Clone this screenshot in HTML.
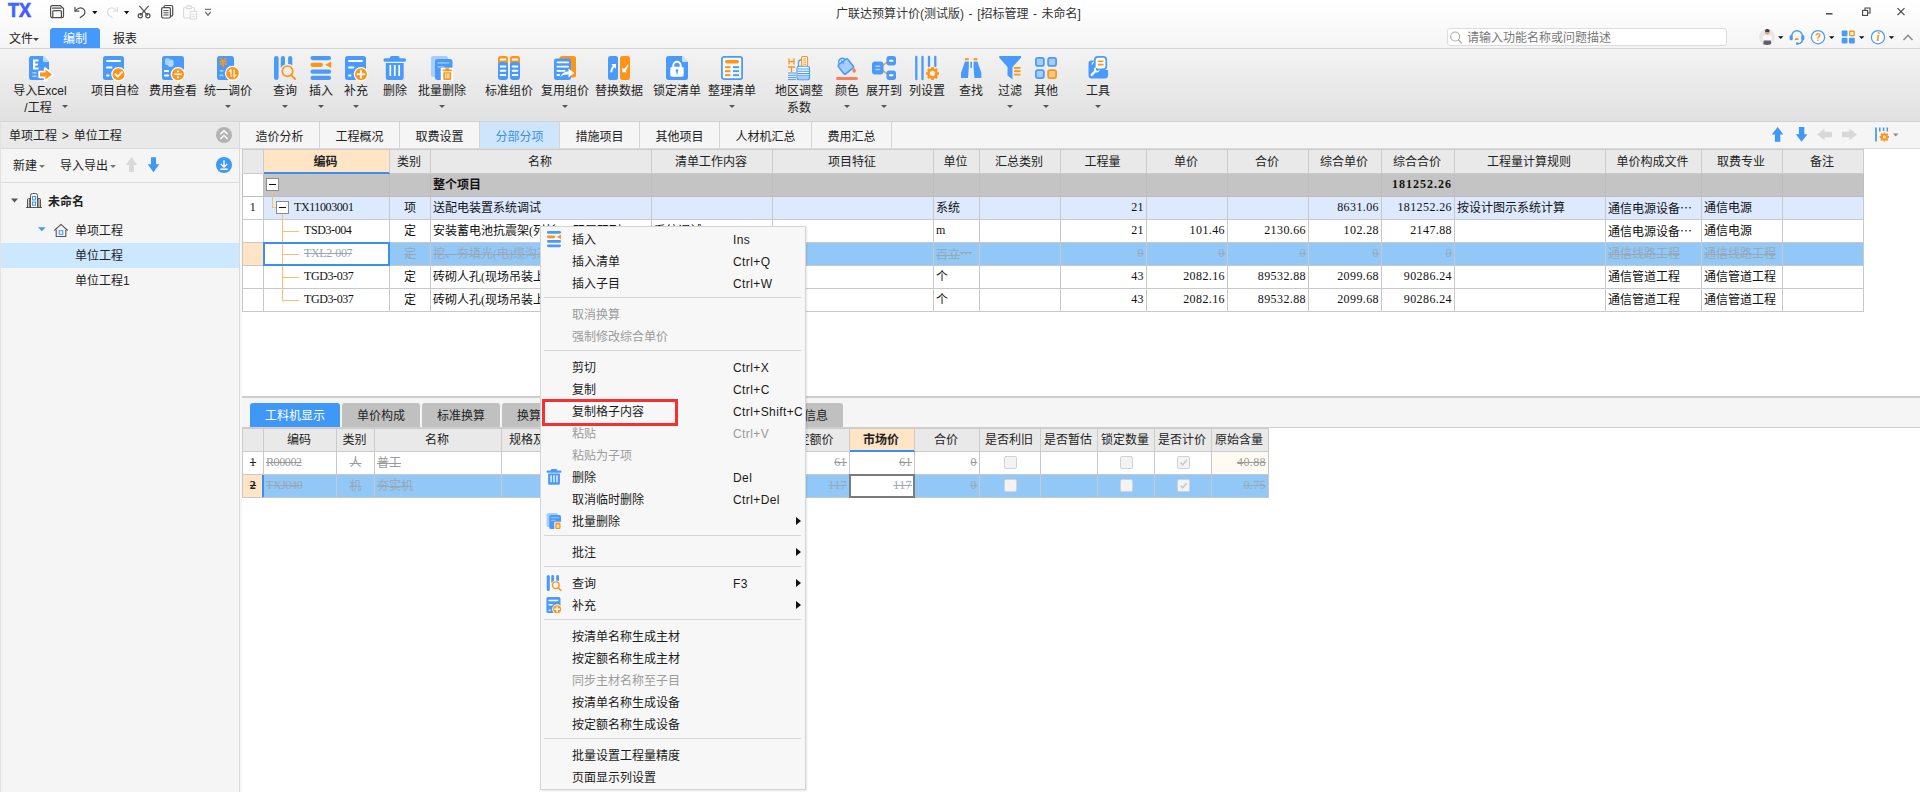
<!DOCTYPE html>
<html lang="zh-CN">
<head>
<meta charset="utf-8">
<title>广联达预算计价(测试版) - [招标管理 - 未命名]</title>
<style>
*{box-sizing:border-box;margin:0;padding:0}
html,body{width:1920px;height:792px;overflow:hidden;background:#fff}
body{position:relative;font-family:"Liberation Sans","Noto Sans CJK SC",sans-serif;font-size:12px;color:#222;line-height:1}
.abs{position:absolute}
svg{position:absolute;overflow:visible}
.t{position:absolute;white-space:nowrap;line-height:16px;height:16px}
/* title bar */
#titlebar{position:absolute;left:0;top:0;width:1920px;height:49px;background:linear-gradient(#ffffff 0,#fdfdfd 14px,#f4f4f4 49px)}
#title{position:absolute;left:0;width:1917px;top:6px;word-spacing:1.2px;text-align:center;line-height:16px;color:#333;font-size:12px}
#ribbon{position:absolute;left:0;top:48px;width:1920px;height:74px;background:linear-gradient(#f3f3f3,#e1e1e1);border-top:1px solid #d6d6d6;border-bottom:1px solid #d2d2d2}
.mtab{position:absolute;top:28px;height:21px;line-height:22px;font-size:12px;color:#222;text-align:center}
#mtab-edit{left:50px;width:50px;background:#4699fc;color:#fff;border-radius:3px 3px 0 0}
.rlabel{position:absolute;top:83px;line-height:16px;text-align:center;white-space:nowrap;color:#222;font-size:12px;transform:translateX(-50%)}
.rarrow{position:absolute;width:0;height:0;border-left:3px solid transparent;border-right:3px solid transparent;border-top:3px solid #555}
#search{position:absolute;left:1447px;top:28px;width:280px;height:18px;background:#fff;border:1px solid #dcdcdc;border-radius:3px}
#search span{position:absolute;left:19px;top:1px;line-height:16px;color:#777;font-size:12px;white-space:nowrap}
/* left panel */
#left{position:absolute;left:0;top:122px;width:240px;height:670px;background:#f5f5f5;border-right:1px solid #dadada;border-left:1px solid #e2e2e2}
#lhead{position:absolute;left:0;top:0;width:238px;height:27px;background:#e9e9e9;border-bottom:1px solid #d9d9d9;border-top:1px solid #ededed}
#ltool{position:absolute;left:0;top:27px;width:238px;height:34px;border-bottom:1px solid #dcdcdc}
#lsel{position:absolute;left:0;top:121px;width:238px;height:25px;background:#cce8ff}
/* main tabs */
#tabbar{position:absolute;left:240px;top:122px;width:1680px;height:27px;background:#f5f5f5;border-bottom:1px solid #dcdcdc}
.tab{position:absolute;top:0;height:26px;line-height:30px;text-align:center;border-right:1px solid #d4d4d4;color:#222;font-size:12px}
.tab.on{background:#cfe5fb;color:#3b8ff0}
/* grids */
.grid{position:absolute;border-collapse:collapse;table-layout:fixed;font-size:12px;font-family:"Liberation Serif","Noto Sans CJK SC",sans-serif}
.grid td{border:1px solid #c8c8c8;height:23px;padding:0 2px;white-space:nowrap;overflow:hidden;line-height:16px;vertical-align:middle;color:#111}
.grid tr.h td{background:#e9e9e9;text-align:center;color:#222;padding:0 2px 0 0;border-color:#cbcbcb}
.grid td.hot{background:#ffe4c6 !important;font-weight:bold;border-bottom:1px solid #3b8ff0 !important;box-shadow:inset 0 -1px 0 #3b8ff0}
.grid tr.h24 td{height:24px}
.grid td.r{text-align:right;padding-right:2px}
.grid td.c{text-align:center;padding:0}
.grid tr.g td{background:#c4c4c4;font-weight:bold;border-color:#bdbdbd}
.grid tr.b td{background:#dde9fe}
.grid tr.s td{background:#92c8f7;color:#9aa7b5;text-decoration:line-through}
.grid tr.d td{color:#9a9a9a;text-decoration:line-through}
.num{font-size:12px;letter-spacing:.4px;position:relative;top:-1px}
.code{letter-spacing:-.4px;position:relative;top:-1px}
.el{font-family:"Noto Sans CJK SC",sans-serif}
/* bottom */
#split{position:absolute;left:242px;top:396px;width:1678px;height:2px;background:#cdcdcd}
#btabbar{position:absolute;left:242px;top:398px;width:1678px;height:30px;background:#f5f5f5;border-bottom:1px solid #d0d0d0}
.btab{position:absolute;top:403px;height:24px;line-height:26px;text-align:center;background:#c0c0c0;color:#222;border-radius:3px 3px 0 0;font-size:12px}
.btab.on{background:#3f97f6;color:#fff}
/* context menu */
#menu{position:absolute;left:540px;top:226px;width:266px;height:564px;background:#f7f7f7;border:1px solid #d4d4d4;box-shadow:1px 1px 2px rgba(0,0,0,.10)}
#menuin{position:absolute;left:1px;top:1px;width:263px;height:560px}
.mi{position:absolute;left:0;width:263px;height:22px;line-height:22px;color:#1a1a1a;font-size:12px}
.mi b{position:absolute;left:30px;top:1px;font-weight:normal;white-space:nowrap}
.mi i{position:absolute;left:191px;top:1px;font-style:normal;white-space:nowrap;letter-spacing:.4px}
.mi.dis{color:#9b9b9b}
.mi u{position:absolute;left:254px;top:7px;width:0;height:0;border-top:4px solid transparent;border-bottom:4px solid transparent;border-left:5px solid #111}
.msep{position:absolute;left:2px;width:257px;height:1px;background:#d6d6d6}
#redbox{position:absolute;left:542px;top:399px;width:136px;height:27px;border:3px solid #f5302f}
.cb{display:inline-block;width:13px;height:13px;background:#f3f3f3;border:1px solid #d2d2d2;border-radius:2px;vertical-align:middle;position:relative;top:-2px}
</style>
</head>
<body>
<div id="titlebar"></div>
<div id="title">广联达预算计价(测试版) - [招标管理 - 未命名]</div>
<div id="search"><span>请输入功能名称或问题描述</span></div>
<!-- title bar icons -->
<svg style="left:0;top:0" width="1920" height="50" viewBox="0 0 1920 50">
<defs><linearGradient id="txg" x1="0" y1="0" x2="1" y2="1"><stop offset="0" stop-color="#3872ff"/><stop offset="1" stop-color="#4a4dff"/></linearGradient></defs>
<text x="8" y="17" font-family="Liberation Sans,sans-serif" font-weight="bold" font-size="20" textLength="23" lengthAdjust="spacingAndGlyphs" fill="url(#txg)" stroke="url(#txg)" stroke-width=".7">TX</text>
<g fill="none" stroke="#4d4d4d" stroke-width="1.2" stroke-linejoin="round" stroke-linecap="round">
<!-- save -->
<path d="M52.2 5.7H60.5L63.5 8.5V16A1.6 1.6 0 0 1 61.9 17.6H52.2A1.6 1.6 0 0 1 50.6 16V7.3A1.6 1.6 0 0 1 52.2 5.7Z"/>
<path d="M52.5 8.2H61"/><path d="M52.8 17.6V11.8A1.2 1.2 0 0 1 54 10.6H60.2A1.2 1.2 0 0 1 61.4 11.8V17.6"/>
<!-- undo -->
<path d="M75 7.4V11.2H78.8"/><path d="M75.3 11C77 8.3 80.3 7.2 82.8 8.6C85.2 10 85.5 12.8 83.8 14.9L80.3 17.6"/>
<!-- scissors -->
<path d="M139.8 6.3L147.5 15.2M148.2 6.3L140.5 15.2"/><circle cx="140.3" cy="15.8" r="2.1"/><circle cx="147.9" cy="15.8" r="2.1"/>
<!-- copy -->
<path d="M164 7.3V6.9A1.4 1.4 0 0 1 165.4 5.5H171.3A1.4 1.4 0 0 1 172.7 6.9V14.8A1.4 1.4 0 0 1 171.3 16.2H170.6"/>
<rect x="161.6" y="7.6" width="8.8" height="10.4" rx="1.4"/><path d="M163.8 10.6H168.2M163.8 12.8H168.2M163.8 15H168.2" stroke-width="1"/>
</g>
<!-- redo (disabled) -->
<g fill="none" stroke="#dcdcdc" stroke-width="1.2" stroke-linejoin="round" stroke-linecap="round">
<path d="M117.4 7.4V11.2H113.6"/><path d="M117.1 11C115.4 8.3 112.1 7.2 109.6 8.6C107.2 10 106.9 12.8 108.6 14.9L112.1 17.6"/>
<!-- paste (disabled) -->
<path d="M186.5 7.5H184.9A1.4 1.4 0 0 0 183.5 8.9V16.6A1.4 1.4 0 0 0 184.9 18H189.5"/><path d="M191.5 7.5H193.1A1.4 1.4 0 0 1 194.5 8.9V10.5"/>
<path d="M186.5 8.6V7A.8 .8 0 0 1 187.3 6.2H187.8A1.3 1.3 0 0 1 190.2 6.2H190.7A.8 .8 0 0 1 191.5 7V8.6Z"/>
<rect x="190.2" y="11.4" width="6.4" height="7.8" rx="1.2"/><path d="M192 14.2H194.8M192 16.4H194.8" stroke-width="1"/>
</g>
<!-- dropdown arrows -->
<path d="M92.2 10.9H97.4L94.8 14.3Z" fill="#111"/><path d="M124 10.9H129.2L126.6 14.3Z" fill="#111"/>
<!-- more -->
<path d="M205 9.3H211" stroke="#6a6a6a" stroke-width="1.1"/><path d="M205.3 12L208 15.2L210.7 12" fill="none" stroke="#6a6a6a" stroke-width="1.2"/>
<!-- window controls -->
<rect x="1826" y="13" width="6.5" height="1.6" fill="#555"/>
<g fill="none" stroke="#444" stroke-width="1.1"><path d="M1865 10V8H1870V13H1868"/><rect x="1862.6" y="10.4" width="5" height="5"/></g>
<path d="M1897.5 8.2L1904.5 15.2M1904.5 8.2L1897.5 15.2" stroke="#444" stroke-width="1.2"/>
<!-- search icon -->
<circle cx="1455.2" cy="36.5" r="4.5" fill="none" stroke="#b0b0b0" stroke-width="1.2"/><path d="M1458.5 40L1461.5 43" stroke="#b0b0b0" stroke-width="1.3" stroke-linecap="round"/>
<!-- avatar -->
<circle cx="1767" cy="37" r="8" fill="#e9e6e6"/>
<clipPath id="avc"><circle cx="1767" cy="37" r="8"/></clipPath>
<g clip-path="url(#avc)"><circle cx="1767.3" cy="32.3" r="2.3" fill="#c9a58f"/><path d="M1765 30.8A2.4 2.4 0 0 1 1769.7 30.8L1769 32H1765.5Z" fill="#4a3c3a"/>
<path d="M1762.5 36.5C1764 34.8 1770.5 34.8 1772 36.5L1771 41H1763.5Z" fill="#fafafa"/><path d="M1763.8 40.5H1770.8L1771.5 46H1763Z" fill="#5e5d68"/></g>
<g fill="#111"><path d="M1778 36.2H1783.4L1780.7 39Z"/><path d="M1829 36.2H1834.4L1831.7 39Z"/><path d="M1859 36.2H1864.4L1861.7 39Z"/><path d="M1888.8 36.2H1894.2L1891.5 39Z"/></g>
<!-- headset -->
<g fill="none" stroke="#4a9bf9" stroke-width="1.5"><path d="M1791.7 36A5.3 5.3 0 0 1 1802.3 36"/><path d="M1802.3 39.5C1802.3 42 1800.5 43.5 1798 43.7" /></g>
<rect x="1789.6" y="35.3" width="3.2" height="5" rx="1.4" fill="#4a9bf9"/><rect x="1801.2" y="35.3" width="3.2" height="5" rx="1.4" fill="#4a9bf9"/>
<rect x="1794.6" y="38.3" width="4.2" height="1.7" rx=".8" fill="#ff9416"/><circle cx="1797.2" cy="43.6" r="1.3" fill="#4a9bf9"/>
<!-- help -->
<circle cx="1818" cy="37.2" r="6.6" fill="#fff" stroke="#4a9bf9" stroke-width="1.3"/>
<text x="1818" y="41.3" text-anchor="middle" font-family="Liberation Sans,sans-serif" font-weight="bold" font-size="10" fill="#ff9416">?</text>
<!-- grid -->
<g fill="#4a9bf9"><rect x="1841.7" y="30.5" width="5.8" height="5.8" rx="1"/><rect x="1841.7" y="37.7" width="5.8" height="5.8" rx="1"/><rect x="1849" y="37.7" width="5.8" height="5.8" rx="1"/></g>
<rect x="1849.7" y="31.2" width="4.4" height="4.4" rx=".6" fill="#fff" stroke="#ff9416" stroke-width="1.4"/>
<!-- info -->
<circle cx="1878" cy="37.2" r="6.6" fill="#fff" stroke="#4a9bf9" stroke-width="1.3"/>
<text x="1878.2" y="41.4" text-anchor="middle" font-family="Liberation Serif,serif" font-weight="bold" font-style="italic" font-size="12" fill="#ff9416">i</text>
<!-- chevron -->
<path d="M1903.5 40L1908 35.3L1912.5 40" fill="none" stroke="#8a8a8a" stroke-width="1.5"/>
</svg>

<div class="mtab" style="left:9px;width:24px">文件</div><div class="rarrow" style="left:33px;top:38px;border-top-color:#444"></div>
<div class="mtab" id="mtab-edit">编制</div>
<div class="mtab" style="left:113px;width:24px">报表</div>
<div id="ribbon"></div>
<div class="rlabel" style="left:40px">导入Excel</div>
<div class="rlabel" style="left:38px;top:100px">/工程</div>
<div class="rarrow" style="left:62px;top:105px"></div>
<div class="rlabel" style="left:115px">项目自检</div>
<div class="rlabel" style="left:173px">费用查看</div>
<div class="rlabel" style="left:228px">统一调价</div>
<div class="rarrow" style="left:225px;top:105px"></div>
<div class="rlabel" style="left:285px">查询</div>
<div class="rarrow" style="left:282px;top:105px"></div>
<div class="rlabel" style="left:321px">插入</div>
<div class="rarrow" style="left:318px;top:105px"></div>
<div class="rlabel" style="left:356px">补充</div>
<div class="rarrow" style="left:353px;top:105px"></div>
<div class="rlabel" style="left:395px">删除</div>
<div class="rlabel" style="left:442px">批量删除</div>
<div class="rarrow" style="left:439px;top:105px"></div>
<div class="rlabel" style="left:509px">标准组价</div>
<div class="rlabel" style="left:565px">复用组价</div>
<div class="rarrow" style="left:562px;top:105px"></div>
<div class="rlabel" style="left:619px">替换数据</div>
<div class="rlabel" style="left:677px">锁定清单</div>
<div class="rlabel" style="left:732px">整理清单</div>
<div class="rarrow" style="left:729px;top:105px"></div>
<div class="rlabel" style="left:799px">地区调整</div>
<div class="rlabel" style="left:799px;top:100px">系数</div>
<div class="rlabel" style="left:847px">颜色</div>
<div class="rarrow" style="left:844px;top:105px"></div>
<div class="rlabel" style="left:884px">展开到</div>
<div class="rarrow" style="left:881px;top:105px"></div>
<div class="rlabel" style="left:927px">列设置</div>
<div class="rlabel" style="left:971px">查找</div>
<div class="rlabel" style="left:1010px">过滤</div>
<div class="rarrow" style="left:1007px;top:105px"></div>
<div class="rlabel" style="left:1046px">其他</div>
<div class="rarrow" style="left:1043px;top:105px"></div>
<div class="rlabel" style="left:1098px">工具</div>
<div class="rarrow" style="left:1095px;top:105px"></div>
<!-- ribbon icons -->
<svg style="left:0;top:0" width="1920" height="130" viewBox="0 0 1920 130">
<!-- import excel -->
<g transform="translate(29,56)">
<path d="M2.5 0H14L20 6V21.5A2.5 2.5 0 0 1 17.5 24H2.5A2.5 2.5 0 0 1 0 21.5V2.5A2.5 2.5 0 0 1 2.5 0Z" fill="#4a9bf9"/>
<path d="M14 0L20 6H15.5A1.5 1.5 0 0 1 14 4.5Z" fill="#b9d9fd"/>
<path d="M4 3.5H9.5V5.5H6.2V7.5H9V9.4H6.2V11.5H9.5V13.5H4Z" fill="#fff"/>
<rect x="3.5" y="16" width="4" height="1.6" fill="#a9d0fc"/><rect x="3.5" y="19.5" width="4" height="1.6" fill="#a9d0fc"/>
<path d="M10.5 16H16V12.5L23.5 18.5L16 24.5V21H10.5Z" fill="#fff" stroke="#fff" stroke-width="2.4" stroke-linejoin="round"/>
<path d="M11 16.5H16.5V13.5L23 18.5L16.5 23.5V20.5H11Z" fill="#ff9416"/>
</g>
<!-- self check -->
<g transform="translate(103,56)">
<rect x="0" y="0" width="21" height="24" rx="2.5" fill="#4a9bf9"/>
<rect x="3" y="4" width="15" height="2" rx="1" fill="#fff"/><rect x="3" y="10.5" width="6.5" height="2" rx="1" fill="#fff"/><rect x="3" y="18.5" width="3.5" height="2" rx="1" fill="#fff"/>
<circle cx="15.5" cy="18.3" r="7.3" fill="#fff"/><circle cx="15.5" cy="18.3" r="6" fill="#ff9416"/>
<path d="M12.3 18.2L14.8 20.7L19 16.2" fill="none" stroke="#fff" stroke-width="1.8" stroke-linecap="round" stroke-linejoin="round"/>
</g>
<!-- fee view -->
<g transform="translate(162,56)">
<rect x="0" y="0" width="22" height="24" rx="2.5" fill="#4a9bf9"/>
<g fill="#a9d0fc"><rect x="3" y="2.2" width="5" height="7" rx="2"/><rect x="6" y="3.5" width="5.5" height="7.5" rx="2"/></g>
<g stroke="#dcecfe" stroke-width=".6" fill="none"><path d="M6.2 6H11.3M6.2 8.3H11.3"/></g>
<rect x="2" y="14" width="5" height="2" rx=".8" fill="#fff"/><rect x="2" y="18.5" width="5" height="2" rx=".8" fill="#fff"/>
<circle cx="16" cy="18.3" r="7.3" fill="#fff"/><circle cx="16" cy="18.3" r="6" fill="#ff9416"/>
<rect x="12.3" y="17.5" width="7.4" height="1.6" fill="#fff"/><circle cx="16" cy="15.3" r="1.1" fill="#fff"/><circle cx="16" cy="21.3" r="1.1" fill="#fff"/>
</g>
<!-- adjust price -->
<g transform="translate(217,56)">
<rect x="0" y="0" width="17" height="24" rx="2.5" fill="#4a9bf9"/>
<path d="M3.5 2L6.2 5.2L9 2M2.5 5.4H10M2.5 8H10M6.2 5.4V11.5" fill="none" stroke="#ff9416" stroke-width="1.5"/>
<rect x="2.5" y="14" width="4" height="1.8" rx=".8" fill="#a9d0fc"/><rect x="2.5" y="18.5" width="4" height="1.8" rx=".8" fill="#a9d0fc"/>
<circle cx="15.5" cy="17.3" r="7.6" fill="#fff"/><circle cx="15.5" cy="17.3" r="6.3" fill="#ff9416"/>
<path d="M13.4 21V15.8H11.2L13.9 12.7L14.6 13.5V21ZM17.6 13.6V18.8H19.8L17.1 21.9L16.4 21.1V13.6Z" fill="#fff"/>
</g>
<!-- query -->
<g transform="translate(273.5,56)">
<rect x="0.5" y="0" width="4.6" height="24" rx="2.3" fill="#4a9bf9"/>
<path d="M7.3 2A2.1 2.1 0 0 1 11.5 2V8.5A7 7 0 0 0 7.3 12Z" fill="#4a9bf9"/>
<path d="M14.6 2A2.1 2.1 0 0 1 18.8 2V9.5A7 7 0 0 0 14.6 8.1Z" fill="#4a9bf9"/>
<circle cx="14" cy="15.2" r="5.2" fill="none" stroke="#ff9416" stroke-width="1.7"/>
<path d="M17.8 19.2L21.6 23" stroke="#ff9416" stroke-width="1.9" stroke-linecap="round"/>
</g>
<!-- insert -->
<g transform="translate(310.5,56)">
<rect x="0" y="0" width="20.6" height="4.2" rx="2.1" fill="#4a9bf9"/>
<rect x="0" y="6.7" width="12.5" height="4.2" rx="2.1" fill="#ff9416"/>
<path d="M20.6 5.5V12L14.6 8.8Z" fill="#ff9416"/>
<rect x="0" y="13.6" width="20.6" height="4.2" rx="2.1" fill="#4a9bf9"/>
<rect x="0" y="19.8" width="20.6" height="4.2" rx="2.1" fill="#4a9bf9"/>
</g>
<!-- supplement -->
<g transform="translate(345,56)">
<rect x="0" y="0" width="21" height="24" rx="2.5" fill="#4a9bf9"/>
<rect x="3" y="4" width="15" height="2" rx="1" fill="#fff"/><rect x="3" y="10.5" width="6.5" height="2" rx="1" fill="#fff"/><rect x="3" y="18.5" width="3.5" height="2" rx="1" fill="#fff"/>
<circle cx="16" cy="18.3" r="7.3" fill="#fff"/><circle cx="16" cy="18.3" r="6" fill="#ff9416"/>
<path d="M16 14.8V21.8M12.5 18.3H19.5" stroke="#fff" stroke-width="1.9" stroke-linecap="round"/>
</g>
<!-- delete -->
<g transform="translate(383.5,56)">
<path d="M8 0H14.5A1.5 1.5 0 0 1 16 1.5V2.2H21A1.5 1.5 0 0 1 22.5 3.7V4.2A1.5 1.5 0 0 1 21 5.7H1.5A1.5 1.5 0 0 1 0 4.2V3.7A1.5 1.5 0 0 1 1.5 2.2H6.5V1.5A1.5 1.5 0 0 1 8 0Z" fill="#4a9bf9"/>
<path d="M2.3 7H20.2V21.5A2.5 2.5 0 0 1 17.7 24H4.8A2.5 2.5 0 0 1 2.3 21.5Z" fill="#4a9bf9"/>
<path d="M6.8 9V20M11.25 9V20M15.7 9V20" stroke="#fff" stroke-width="1.7"/>
</g>
<!-- batch delete -->
<g transform="translate(431,56)">
<rect x="0" y="0" width="17" height="21" rx="2.5" fill="#a6cdfb"/>
<rect x="4" y="3" width="17.5" height="21" rx="2.5" fill="#4a9bf9"/>
<rect x="6.5" y="6" width="12" height="1.8" rx=".9" fill="#8ec0fb"/><rect x="6.5" y="10" width="7" height="1.8" rx=".9" fill="#8ec0fb"/>
<path d="M10.5 12.5H21.5V24H10.5Z" fill="#fff" stroke="#fff" stroke-width="1.5" stroke-linejoin="round"/>
<path d="M14.3 12.3H18.2V13.4H20.3A.8 .8 0 0 1 21.1 14.2V14.5A.8 .8 0 0 1 20.3 15.3H12.2A.8 .8 0 0 1 11.4 14.5V14.2A.8 .8 0 0 1 12.2 13.4H14.3Z" fill="#ff9416"/>
<path d="M12.3 16.3H20.2V22.7A1.3 1.3 0 0 1 18.9 24H13.6A1.3 1.3 0 0 1 12.3 22.7Z" fill="#ff9416"/>
<path d="M14.6 17.5V22.5M16.25 17.5V22.5M17.9 17.5V22.5" stroke="#fff" stroke-width=".9"/>
</g>
<!-- standard group price -->
<g transform="translate(498,56)">
<path d="M2.5 0H7.5A2.5 2.5 0 0 1 10 2.5V8H0V2.5A2.5 2.5 0 0 1 2.5 0Z" fill="#ff9416"/>
<path d="M14.5 0H19.5A2.5 2.5 0 0 1 22 2.5V8H12V2.5A2.5 2.5 0 0 1 14.5 0Z" fill="#ff9416"/>
<rect x="0" y="6" width="10" height="18" rx="3" fill="#4a9bf9"/><rect x="12" y="6" width="10" height="18" rx="3" fill="#4a9bf9"/>
<g fill="#fff"><rect x="1.7" y="2.5" width="6.6" height="1.9" rx=".9"/><rect x="13.7" y="2.5" width="6.6" height="1.9" rx=".9"/>
<rect x="1.7" y="9.5" width="6.6" height="2" rx="1"/><rect x="13.7" y="9.5" width="6.6" height="2" rx="1"/>
<rect x="1.7" y="13.7" width="6.6" height="2" rx="1"/><rect x="13.7" y="13.7" width="6.6" height="2" rx="1"/>
<rect x="1.7" y="17.9" width="6.6" height="2" rx="1"/><rect x="13.7" y="17.9" width="6.6" height="2" rx="1"/></g>
</g>
<!-- reuse group price -->
<g transform="translate(554,56)">
<rect x="5.5" y="0" width="16.5" height="21.5" rx="2.5" fill="#ff9416"/>
<rect x="0" y="2.5" width="17" height="21.5" rx="2.5" fill="#4a9bf9"/>
<g fill="#fff"><rect x="2.5" y="5.5" width="12.5" height="1.8" rx=".9"/><rect x="2.5" y="9.7" width="12.5" height="1.8" rx=".9"/><rect x="2.5" y="13.9" width="9" height="1.8" rx=".9"/><rect x="2.5" y="18.1" width="3.5" height="1.8" rx=".9"/></g>
<path d="M6.2 21C8 17 11 15.4 14.5 15.4V12.6L20.3 17L14.5 21.4V18.6C11.5 18.4 9 19 6.2 21Z" fill="#fff"/>
</g>
<!-- replace data -->
<g transform="translate(608,56)">
<rect x="0" y="0" width="10" height="24" rx="2.5" fill="#4a9bf9"/><rect x="12" y="0" width="10" height="24" rx="2.5" fill="#ff9416"/>
<path d="M3.3 8H8V12.8L6.4 11.2C5 12.6 4.4 14.2 4.3 16.3H2.3C2.3 13.5 3.2 11.5 4.9 9.7Z" fill="#fff"/>
<path d="M19.3 8.5L20.3 9C20 11.5 19 13.3 17.5 14.8L19 16.3H14.3V11.5L15.9 13.1C17.5 11.8 18.5 10.5 19.3 8.5Z" fill="#fff"/>
</g>
<!-- lock list -->
<g transform="translate(666,56)">
<path d="M2.5 0H16L22 6V21.5A2.5 2.5 0 0 1 19.5 24H2.5A2.5 2.5 0 0 1 0 21.5V2.5A2.5 2.5 0 0 1 2.5 0Z" fill="#4a9bf9"/>
<path d="M16 0L22 6H17.5A1.5 1.5 0 0 1 16 4.5Z" fill="#cfe4fd"/>
<path d="M7.3 11V9.5A3.7 3.7 0 0 1 14.7 9.5V11" fill="none" stroke="#fff" stroke-width="1.9"/>
<rect x="4.3" y="10.8" width="13.4" height="10" rx="1.8" fill="#fff"/>
<circle cx="11" cy="14.6" r="1.3" fill="#4a9bf9"/><rect x="10.4" y="15" width="1.2" height="3.2" fill="#4a9bf9"/>
</g>
<!-- tidy list -->
<g transform="translate(721,56)">
<rect x=".9" y=".9" width="20.2" height="22.2" rx="2.2" fill="#f4f8fd" stroke="#4a9bf9" stroke-width="1.8"/>
<rect x="4" y="4" width="14" height="3.6" rx="1.8" fill="#ff9416"/>
<g fill="#ff9416"><rect x="4" y="10.2" width="5.5" height="1.9"/><rect x="4" y="14.2" width="5.5" height="1.9"/><rect x="4" y="18.2" width="5.5" height="1.9"/></g>
<g fill="#4a9bf9"><rect x="12" y="10.2" width="6" height="1.9"/><rect x="12" y="14.2" width="6" height="1.9"/><rect x="12" y="18.2" width="6" height="1.9"/></g>
</g>
<!-- area coefficient -->
<g transform="translate(788,56)">
<path d="M1 2.5V8.5M6 2.5V8.5M1 5.5H6M0 11H7M3.5 11V16.2" fill="none" stroke="#ff9416" stroke-width="1.3"/>
<path d="M0 17H8M0 19.3H8M0 21.6H8M0 23.6H8" stroke="#4a9bf9" stroke-width="1"/>
<path d="M10.5 11V6.5C10.5 4.5 12 3.7 13.5 3.6" fill="none" stroke="#4a9bf9" stroke-width="1.2"/>
<rect x="13.6" y=".5" width="6" height="10" rx="1.2" fill="#fff5e8" stroke="#ff9416" stroke-width="1.1"/>
<path d="M15.3 3H18M15.3 4.8H18M15.3 6.6H18M15.3 8.4H18" stroke="#ff9416" stroke-width=".8"/>
<rect x="9" y="10.3" width="12.5" height="13.4" rx="2" fill="#fff" stroke="#4a9bf9" stroke-width="1.1"/>
<path d="M9.5 13H21M9.5 15.3H21M9.5 17.6H21M9.5 19.9H21M9.5 22H21" stroke="#4a9bf9" stroke-width="1.1"/>
</g>
<!-- color -->
<g transform="translate(836,56)">
<rect x="0" y="21" width="22" height="3" rx="1.5" fill="#fb7f57"/>
<g transform="rotate(-38 10 10)"><rect x="3.6" y="4.5" width="12" height="11.5" rx="1.5" fill="#a6cdfb" stroke="#4a9bf9" stroke-width="1.6"/>
<path d="M6 4.5A3.6 3.6 0 0 1 13.2 4.5" fill="none" stroke="#4a9bf9" stroke-width="1.5"/><path d="M9.6 2.5V7" stroke="#4a9bf9" stroke-width="1.4"/></g>
<path d="M18.2 11.8C19.3 13.2 20 14 20 15A1.8 1.8 0 0 1 16.4 15C16.4 14 17.1 13.2 18.2 11.8Z" fill="#fb7f57"/>
</g>
<!-- expand to -->
<g transform="translate(872,56)">
<path d="M8 12L17 4.5M8 12L17 19.5" stroke="#ff9416" stroke-width="1.4"/>
<rect x="0" y="5.5" width="11.5" height="13" rx="3" fill="#4a9bf9"/><rect x="14.5" y="0" width="9.5" height="9.5" rx="2.7" fill="#4a9bf9"/><rect x="14.5" y="14.5" width="9.5" height="9.5" rx="2.7" fill="#4a9bf9"/>
<rect x="3.3" y="9.6" width="5" height="1.4" rx=".6" fill="#a9d0fc"/><rect x="3.3" y="12.8" width="5" height="1.4" rx=".6" fill="#a9d0fc"/>
<rect x="17" y="3.8" width="4.5" height="2" rx="1" fill="#fff"/><rect x="17" y="18.3" width="4.5" height="2" rx="1" fill="#fff"/>
</g>
<!-- column settings -->
<g transform="translate(915,56)">
<path d="M1.3 .8V23.2M7.5 .8V23.2" stroke="#4a9bf9" stroke-width="2.3" stroke-linecap="round"/>
<path d="M14 .8V10M20.3 .8V10" stroke="#4a9bf9" stroke-width="2.3" stroke-linecap="round"/>
<g transform="translate(17.5,17.5)">
<circle r="4" fill="none" stroke="#ff9416" stroke-width="2.6"/>
<g stroke="#ff9416" stroke-width="2.6" stroke-linecap="butt"><path d="M0 -6.5V-4.5M0 6.5V4.5M-6.5 0H-4.5M6.5 0H4.5M-4.6 -4.6L-3.2 -3.2M4.6 4.6L3.2 3.2M-4.6 4.6L-3.2 3.2M4.6 -4.6L3.2 -3.2"/></g>
</g>
</g>
<!-- find (binoculars) -->
<g transform="translate(961,56)">
<rect x="4" y="2.2" width="3.8" height="2" fill="#ff9416"/><rect x="12.6" y="2.2" width="3.8" height="2" fill="#ff9416"/>
<path d="M4 5.5H7.8V12L7 22H0V17Z" fill="#4a9bf9"/><path d="M12.6 5.5H16.4L20.4 17V22H13.4L12.6 12Z" fill="#4a9bf9"/>
<rect x="9.4" y="5.8" width="1.6" height="6" fill="#4a9bf9"/>
</g>
<!-- filter -->
<g transform="translate(999,56)">
<path d="M1 0H21.3A1 1 0 0 1 22 1.7L13.5 11V23.5L8.5 19.5V11L.3 1.7A1 1 0 0 1 1 0Z" fill="#4a9bf9"/>
<path d="M15 11.8H21.5M15 15.2H21.5M15 18.6H21.5" stroke="#ff9416" stroke-width="1.7"/>
</g>
<!-- other -->
<g transform="translate(1035,57)">
<g fill="#a6cdfb" stroke="#4a9bf9" stroke-width="1.7"><rect x=".9" y=".9" width="8" height="8" rx="2"/><rect x="13.1" y=".9" width="8" height="8" rx="2"/><rect x=".9" y="13.1" width="8" height="8" rx="2"/></g>
<rect x="13.1" y="13.1" width="8" height="8" rx="2" fill="#ffc98c" stroke="#ff9416" stroke-width="1.7"/>
</g>
<!-- tools -->
<g transform="translate(1088.5,56)">
<path d="M3 4.5H5.5V14H19.5V19.5A3 3 0 0 1 16.5 22.5H3A3 3 0 0 1 0 19.5V7.5A3 3 0 0 1 3 4.5Z" fill="#4a9bf9"/>
<path d="M3.8 8.5A2.3 2.3 0 0 1 5.8 6" fill="none" stroke="#fff" stroke-width="1.2"/>
<rect x="6.3" y=".9" width="11.5" height="12.5" rx="3.2" fill="#fff" stroke="#4a9bf9" stroke-width="1.7"/>
<path d="M9.3 5.3H15M9.3 8.6H15" stroke="#ff9416" stroke-width="1.6"/>
<path d="M8.5 11A2.7 2.7 0 0 0 5.7 14.6L2.3 18.2A1.1 1.1 0 0 0 3.9 19.8L7.4 16.3A2.7 2.7 0 0 0 11 13.2L9.3 14.9L7.7 14.4L7.2 12.8Z" fill="#fff"/>
</g>
</svg>

<div id="left"><div id="lhead"></div><div id="ltool"></div><div id="lsel"></div></div>
<div class="t" style="left:9px;top:128px;color:#222;word-spacing:1.5px">单项工程 &gt; 单位工程</div>
<div class="t" style="left:13px;top:158px;">新建</div>
<div class="rarrow" style="left:39px;top:165px;border-top-color:#777"></div>
<div class="t" style="left:60px;top:158px;">导入导出</div>
<div class="rarrow" style="left:110px;top:165px;border-top-color:#777"></div>
<div class="t" style="left:48px;top:194px;font-weight:bold">未命名</div>
<div class="t" style="left:75px;top:223px;">单项工程</div>
<div class="t" style="left:75px;top:248px;">单位工程</div>
<div class="t" style="left:75px;top:273px;">单位工程1</div>
<!-- left panel icons -->
<svg style="left:0;top:0" width="240" height="300" viewBox="0 0 240 300">
<circle cx="224" cy="135" r="8" fill="#b3b3b3"/><path d="M220.3 134.3L224 130.8L227.7 134.3M220.3 139L224 135.5L227.7 139" fill="none" stroke="#fff" stroke-width="1.4"/>
<path d="M131.5 157L137.3 165H134V172H129V165H125.7Z" fill="#d9d9d9"/>
<path d="M153.5 172.2L147.7 164.2H151V157.2H156V164.2H159.3Z" fill="#3f97f6"/>
<circle cx="224" cy="165" r="8" fill="#3f97f6"/><path d="M224 160.3V166.5M220.8 164L224 167L227.2 164M220.3 169.3H227.7" fill="none" stroke="#fff" stroke-width="1.4"/>
<path d="M11 198.5H18L14.5 202.5Z" fill="#555"/>
<g fill="none" stroke="#555" stroke-width="1"><path d="M26 207.5H42"/><path d="M30.5 207.5V195.5A2 2 0 0 1 32.5 193.5H35.5A2 2 0 0 1 37.5 195.5V207.5"/><path d="M27.5 207.5V199.5A1 1 0 0 1 28.5 198.5H30.5M29.3 198.5V207.5M37.5 198.5H39.5A1 1 0 0 1 40.5 199.5V207.5M38.9 198.5V207.5"/></g>
<g fill="none" stroke="#3f97f6" stroke-width="1"><rect x="32.5" y="196.5" width="3" height="3.4"/><rect x="32.5" y="202" width="3" height="3.2"/></g>
<path d="M38 227.3H45.6L41.8 231.3Z" fill="#3f97f6"/>
<g fill="none" stroke="#555" stroke-width="1.1" stroke-linejoin="round"><path d="M54.3 230.5L61 224.3L67.7 230.5"/><path d="M56.2 229.5V236.5H65.8V229.5"/></g>
<rect x="59.2" y="230.7" width="3.6" height="3.6" fill="none" stroke="#3f97f6" stroke-width="1"/>
</svg>

<div class="abs" style="left:240px;top:149px;width:2px;height:643px;background:#f7f7f7"></div>
<div id="tabbar">
<div class="tab " style="left:0px;width:80px">造价分析</div>
<div class="tab " style="left:80px;width:80px">工程概况</div>
<div class="tab " style="left:160px;width:80px">取费设置</div>
<div class="tab on" style="left:240px;width:80px">分部分项</div>
<div class="tab " style="left:320px;width:80px">措施项目</div>
<div class="tab " style="left:400px;width:80px">其他项目</div>
<div class="tab " style="left:480px;width:92px">人材机汇总</div>
<div class="tab " style="left:572px;width:80px">费用汇总</div>
</div>
<!-- tab bar right icons -->
<svg style="left:1760px;top:122px" width="160" height="27" viewBox="1760 122 160 27">
<path d="M1777.6 127L1783.4 134.5H1780.3V141.7H1774.9V134.5H1771.8Z" fill="#3f97f6"/>
<path d="M1801.6 141.7L1795.8 134.2H1798.9V127H1804.3V134.2H1807.4Z" fill="#3f97f6"/>
<path d="M1817 134.5L1824.5 128.7V131.8H1832V137.2H1824.5V140.3Z" fill="#d8d8d8"/>
<path d="M1857 134.5L1849.5 128.7V131.8H1842V137.2H1849.5V140.3Z" fill="#d8d8d8"/>
<path d="M1876 127.5V141.5" stroke="#3f97f6" stroke-width="1.7"/><path d="M1879.8 127.5V131.5M1883.6 127.5V131M1887.3 127.5V131.5" stroke="#3f97f6" stroke-width="1.5"/>
<g transform="translate(1884.3,137)"><circle r="2.6" fill="none" stroke="#ff9416" stroke-width="2"/><g stroke="#ff9416" stroke-width="1.8"><path d="M0 -4.6V-3M0 4.6V3M-4.6 0H-3M4.6 0H3M-3.3 -3.3L-2.2 -2.2M3.3 3.3L2.2 2.2M-3.3 3.3L-2.2 2.2M3.3 -3.3L2.2 -2.2"/></g></g>
<path d="M1893 133.5H1898.4L1895.7 136.5Z" fill="#8a8a8a"/>
</svg>

<table class="grid" style="left:242px;top:149px;width:1622px"><colgroup>
<col style="width:21px">
<col style="width:126px">
<col style="width:41px">
<col style="width:221px">
<col style="width:121px">
<col style="width:161px">
<col style="width:46px">
<col style="width:81px">
<col style="width:86px">
<col style="width:81px">
<col style="width:81px">
<col style="width:73px">
<col style="width:73px">
<col style="width:151px">
<col style="width:96px">
<col style="width:81px">
<col style="width:81px">
</colgroup>
<tr class="h h24"><td></td><td class=hot>编码</td><td>类别</td><td>名称</td><td>清单工作内容</td><td>项目特征</td><td>单位</td><td>汇总类别</td><td>工程量</td><td>单价</td><td>合价</td><td>综合单价</td><td>综合合价</td><td>工程量计算规则</td><td>单价构成文件</td><td>取费专业</td><td>备注</td></tr>
<tr class="g"><td style="background:#fff"></td><td></td><td></td><td>整个项目</td><td></td><td></td><td></td><td></td><td></td><td></td><td></td><td></td><td class="r"><span class="num" style="letter-spacing:1px">181252.26</span></td><td></td><td></td><td></td><td></td></tr>
<tr class="b"><td class="c" style="background:#fff"><span class="num">1</span></td><td style="padding-left:30px"><span class="code">TX11003001</span></td><td class="c">项</td><td>送配电装置系统调试</td><td></td><td></td><td>系统</td><td></td><td class="r"><span class="num">21</span></td><td></td><td></td><td class="r"><span class="num">8631.06</span></td><td class="r"><span class="num">181252.26</span></td><td>按设计图示系统计算</td><td>通信电源设备<span class="el">…</span></td><td>通信电源</td><td></td></tr>
<tr><td></td><td style="padding-left:40px"><span class="code">TSD3-004</span></td><td class="c">定</td><td>安装蓄电池抗震架(列长)：双层双列</td><td>系统调试</td><td></td><td><span class="num">m</span></td><td></td><td class="r"><span class="num">21</span></td><td class="r"><span class="num">101.46</span></td><td class="r"><span class="num">2130.66</span></td><td class="r"><span class="num">102.28</span></td><td class="r"><span class="num">2147.88</span></td><td></td><td>通信电源设备<span class="el">…</span></td><td>通信电源</td><td></td></tr>
<tr class="s"><td style="background:#ffe4c6"></td><td style="padding-left:40px;background:#fff"><span class="code">TXL2-007</span></td><td class="c">定</td><td>挖、夯填光(电)缆沟及接头坑</td><td></td><td></td><td>百立<span class="el">…</span></td><td></td><td class="r"><span class="num">0</span></td><td class="r"><span class="num">0</span></td><td class="r"><span class="num">0</span></td><td class="r"><span class="num">0</span></td><td class="r"><span class="num">0</span></td><td></td><td>通信线路工程</td><td>通信线路工程</td><td></td></tr>
<tr><td></td><td style="padding-left:40px"><span class="code">TGD3-037</span></td><td class="c">定</td><td>砖砌人孔(现场吊装上覆)</td><td></td><td></td><td>个</td><td></td><td class="r"><span class="num">43</span></td><td class="r"><span class="num">2082.16</span></td><td class="r"><span class="num">89532.88</span></td><td class="r"><span class="num">2099.68</span></td><td class="r"><span class="num">90286.24</span></td><td></td><td>通信管道工程</td><td>通信管道工程</td><td></td></tr>
<tr><td></td><td style="padding-left:40px"><span class="code">TGD3-037</span></td><td class="c">定</td><td>砖砌人孔(现场吊装上覆)</td><td></td><td></td><td>个</td><td></td><td class="r"><span class="num">43</span></td><td class="r"><span class="num">2082.16</span></td><td class="r"><span class="num">89532.88</span></td><td class="r"><span class="num">2099.68</span></td><td class="r"><span class="num">90286.24</span></td><td></td><td>通信管道工程</td><td>通信管道工程</td><td></td></tr>
</table>
<!-- tree connectors in main grid -->
<svg style="left:0;top:0" width="1920" height="792" viewBox="0 0 1920 792" shape-rendering="crispEdges">
<g fill="none" stroke="#ffbd72" stroke-width="1">
<path d="M272.5 191V207.5H276"/>
<path d="M282.5 214V300.5"/>
<path d="M282.5 231.5H299M282.5 254.5H299M282.5 277.5H299M282.5 300.5H299"/>
</g>
<g fill="#fff" stroke="#8c8c8c" stroke-width="1">
<rect x="266.5" y="178.5" width="12" height="12"/>
<rect x="276.5" y="201.5" width="12" height="12"/>
</g>
<g stroke="#111" stroke-width="1"><path d="M269 184.5H276M279 207.5H286"/></g>
</svg>

<div class="abs" style="left:263px;top:242px;width:127px;height:24px;border:2px solid #3b8ff0"></div>
<div id="split"></div><div id="btabbar"></div>
<div class="btab on" style="left:250px;width:90px">工料机显示</div>
<div class="btab " style="left:342px;width:78px">单价构成</div>
<div class="btab " style="left:422px;width:78px">标准换算</div>
<div class="btab " style="left:502px;width:78px">换算信息</div>
<div class="btab " style="left:582px;width:78px">安装费用</div>
<div class="btab " style="left:662px;width:78px">特征及内容</div>
<div class="btab " style="left:765px;width:78px">说明信息</div>
<table class="grid" style="left:242px;top:428px;width:1027px"><colgroup>
<col style="width:21px">
<col style="width:73px">
<col style="width:38px">
<col style="width:127px">
<col style="width:77px">
<col style="width:42px">
<col style="width:50px">
<col style="width:55px">
<col style="width:58px">
<col style="width:66px">
<col style="width:65px">
<col style="width:65px">
<col style="width:61px">
<col style="width:57px">
<col style="width:57px">
<col style="width:57px">
<col style="width:57px">
</colgroup>
<tr class="h"><td></td><td>编码</td><td>类别</td><td>名称</td><td>规格及型号</td><td>单位</td><td>损耗率</td><td>含量</td><td>数量</td><td>定额价</td><td class=hot>市场价</td><td>合价</td><td>是否利旧</td><td>是否暂估</td><td>锁定数量</td><td>是否计价</td><td>原始含量</td></tr>
<tr class="d"><td class="c" style="color:#222"><span class="num">1</span></td><td><span class="code">R00002</span></td><td class="c">人</td><td>普工</td><td></td><td></td><td></td><td></td><td></td><td class="r"><span class="num">61</span></td><td class="r"><span class="num">61</span></td><td class="r"><span class="num">0</span></td><td class="c"><span class="cb"></span></td><td></td><td class="c"><span class="cb"></span></td><td class="c"><span class="cb"><svg style="left:1px;top:1px" width="9" height="9" viewBox="0 0 9 9"><path d="M1.5 4.5 L3.7 6.8 L7.8 2" fill="none" stroke="#c9c9c9" stroke-width="1.6"/></svg></span></td><td class="r" style="background:#fffaf2"><span class="num">40.88</span></td></tr>
<tr class="s"><td class="c" style="background:#ffe4c6;color:#222;font-weight:bold"><span class="num">2</span></td><td><span class="code">TXJ040</span></td><td class="c">机</td><td>夯实机</td><td></td><td></td><td></td><td></td><td></td><td class="r"><span class="num">117</span></td><td class="r" style="background:#fff"><span class="num">117</span></td><td class="r"><span class="num">0</span></td><td class="c"><span class="cb"></span></td><td></td><td class="c"><span class="cb"></span></td><td class="c"><span class="cb"><svg style="left:1px;top:1px" width="9" height="9" viewBox="0 0 9 9"><path d="M1.5 4.5 L3.7 6.8 L7.8 2" fill="none" stroke="#c9c9c9" stroke-width="1.6"/></svg></span></td><td class="r"><span class="num">0.75</span></td></tr>
</table>
<div class="abs" style="left:262px;top:475px;width:2px;height:22px;background:#3b8ff0"></div>
<div class="abs" style="left:849px;top:474px;width:66px;height:24px;border:2px solid #7b7b7b"></div>
<div id="menu"><div id="menuin">
<div class="mi" style="top:0px"><b>插入</b><i>Ins</i></div>
<div class="mi" style="top:22px"><b>插入清单</b><i>Ctrl+Q</i></div>
<div class="mi" style="top:44px"><b>插入子目</b><i>Ctrl+W</i></div>
<div class="msep" style="top:69px"></div>
<div class="mi dis" style="top:75px"><b>取消换算</b></div>
<div class="mi dis" style="top:97px"><b>强制修改综合单价</b></div>
<div class="msep" style="top:122px"></div>
<div class="mi" style="top:128px"><b>剪切</b><i>Ctrl+X</i></div>
<div class="mi" style="top:150px"><b>复制</b><i>Ctrl+C</i></div>
<div class="mi" style="top:172px"><b>复制格子内容</b><i>Ctrl+Shift+C</i></div>
<div class="mi dis" style="top:194px"><b>粘贴</b><i>Ctrl+V</i></div>
<div class="mi dis" style="top:216px"><b>粘贴为子项</b></div>
<div class="mi" style="top:238px"><b>删除</b><i>Del</i></div>
<div class="mi" style="top:260px"><b>取消临时删除</b><i>Ctrl+Del</i></div>
<div class="mi" style="top:282px"><b>批量删除</b><u></u></div>
<div class="msep" style="top:307px"></div>
<div class="mi" style="top:313px"><b>批注</b><u></u></div>
<div class="msep" style="top:338px"></div>
<div class="mi" style="top:344px"><b>查询</b><i>F3</i><u></u></div>
<div class="mi" style="top:366px"><b>补充</b><u></u></div>
<div class="msep" style="top:391px"></div>
<div class="mi" style="top:397px"><b>按清单名称生成主材</b></div>
<div class="mi" style="top:419px"><b>按定额名称生成主材</b></div>
<div class="mi dis" style="top:441px"><b>同步主材名称至子目</b></div>
<div class="mi" style="top:463px"><b>按清单名称生成设备</b></div>
<div class="mi" style="top:485px"><b>按定额名称生成设备</b></div>
<div class="msep" style="top:510px"></div>
<div class="mi" style="top:516px"><b>批量设置工程量精度</b></div>
<div class="mi" style="top:538px"><b>页面显示列设置</b></div>
<!-- context menu icons -->
<svg style="left:0;top:0" width="30" height="560" viewBox="0 0 30 560">
<g transform="translate(5,3) scale(.68)">
<rect x="0" y="0" width="20.6" height="4" rx="2" fill="#4a9bf9"/><rect x="0" y="6.6" width="12" height="4" rx="2" fill="#ff9416"/><path d="M20.6 5.3V12L14.6 8.6Z" fill="#ff9416"/>
<rect x="0" y="13.4" width="20.6" height="4" rx="2" fill="#4a9bf9"/><rect x="0" y="19.8" width="20.6" height="4" rx="2" fill="#4a9bf9"/>
</g>
<g transform="translate(4.6,241) scale(.66)">
<path d="M8 0H14.5A1.5 1.5 0 0 1 16 1.5V2.2H21A1.5 1.5 0 0 1 22.5 3.7V4.2A1.5 1.5 0 0 1 21 5.7H1.5A1.5 1.5 0 0 1 0 4.2V3.7A1.5 1.5 0 0 1 1.5 2.2H6.5V1.5A1.5 1.5 0 0 1 8 0Z" fill="#4a9bf9"/>
<path d="M2.3 7H20.2V21.5A2.5 2.5 0 0 1 17.7 24H4.8A2.5 2.5 0 0 1 2.3 21.5Z" fill="#4a9bf9"/>
<path d="M6.8 9.5V20M11.25 9.5V20M15.7 9.5V20" stroke="#fff" stroke-width="1.9"/>
</g>
<g transform="translate(4.6,285) scale(.67)">
<rect x="0" y="0" width="17" height="21" rx="2.5" fill="#a6cdfb"/><rect x="4" y="3" width="17.5" height="21" rx="2.5" fill="#4a9bf9"/>
<rect x="6.5" y="6" width="12" height="1.8" rx=".9" fill="#8ec0fb"/><rect x="6.5" y="10" width="7" height="1.8" rx=".9" fill="#8ec0fb"/>
<rect x="11.5" y="13" width="10.5" height="11.5" rx="1.5" fill="#fff"/>
<rect x="12.8" y="14.3" width="8" height="9.7" rx="1.6" fill="#ff9416"/><rect x="14.8" y="17" width="4" height="5" fill="#ffe3c0"/>
</g>
<g transform="translate(4.4,347) scale(.67)">
<rect x="0.5" y="0" width="4.6" height="24" rx="2.3" fill="#4a9bf9"/>
<path d="M7.3 2A2.1 2.1 0 0 1 11.5 2V8.5A7 7 0 0 0 7.3 12Z" fill="#4a9bf9"/><path d="M14.6 2A2.1 2.1 0 0 1 18.8 2V9.5A7 7 0 0 0 14.6 8.1Z" fill="#4a9bf9"/>
<circle cx="14" cy="15.2" r="5" fill="none" stroke="#ff9416" stroke-width="2.1"/><path d="M17.8 19.2L21.6 23" stroke="#ff9416" stroke-width="2.2" stroke-linecap="round"/>
</g>
<g transform="translate(4.4,369) scale(.67)">
<rect x="0" y="0" width="21" height="24" rx="2.5" fill="#4a9bf9"/>
<rect x="3" y="4" width="15" height="2.2" rx="1" fill="#fff"/><rect x="3" y="10.5" width="6.5" height="2.2" rx="1" fill="#fff"/><rect x="3" y="18.5" width="3.5" height="2.2" rx="1" fill="#fff"/>
<circle cx="16" cy="18.3" r="7.3" fill="#fff"/><circle cx="16" cy="18.3" r="6" fill="#ff9416"/>
<path d="M16 14.8V21.8M12.5 18.3H19.5" stroke="#fff" stroke-width="2.2" stroke-linecap="round"/>
</g>
</svg>

</div></div>
<div id="redbox"></div>
</body>
</html>
